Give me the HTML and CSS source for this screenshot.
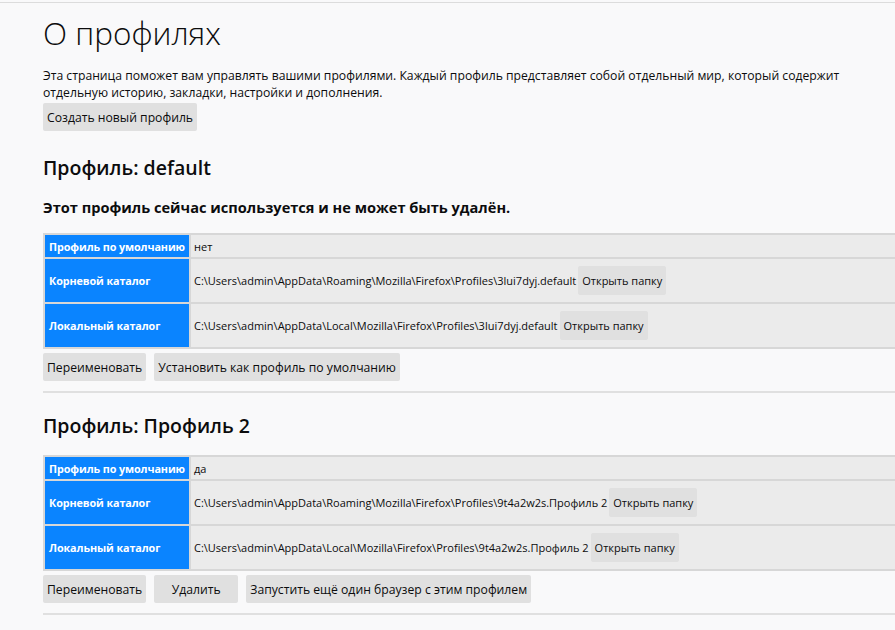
FILE: index.html
```html
<!DOCTYPE html>
<html lang="ru">
<head>
<meta charset="utf-8">
<title>О профилях</title>
<link rel="stylesheet" href="styles.css">
</head>
<body>
<div class="topline"></div>
<main class="page">
  <h1 class="title">О профилях</h1>
  <p class="intro">Эта страница поможет вам управлять вашими профилями. Каждый профиль представляет собой отдельный мир, который содержит отдельную историю, закладки, настройки и дополнения.</p>
  <button class="btn">Создать новый профиль</button>

  <section class="profile">
    <h2 class="ptitle">Профиль: default</h2>
    <h3 class="inuse">Этот профиль сейчас используется и не может быть удалён.</h3>
    <table class="ptable">
      <tr class="short"><th>Профиль по умолчанию</th><td>нет</td></tr>
      <tr><th>Корневой каталог</th><td><span class="path">C:\Users\admin\AppData\Roaming\Mozilla\Firefox\Profiles\3lui7dyj.default</span><button class="btn">Открыть папку</button></td></tr>
      <tr><th>Локальный каталог</th><td><span class="path">C:\Users\admin\AppData\Local\Mozilla\Firefox\Profiles\3lui7dyj.default</span><button class="btn">Открыть папку</button></td></tr>
    </table>
    <div class="actions">
      <button class="btn">Переименовать</button>
      <button class="btn">Установить как профиль по умолчанию</button>
    </div>
  </section>
  <hr class="sep">

  <section class="profile next">
    <h2 class="ptitle">Профиль: Профиль 2</h2>
    <table class="ptable">
      <tr class="short"><th>Профиль по умолчанию</th><td>да</td></tr>
      <tr><th>Корневой каталог</th><td><span class="path">C:\Users\admin\AppData\Roaming\Mozilla\Firefox\Profiles\9t4a2w2s.Профиль 2</span><button class="btn">Открыть папку</button></td></tr>
      <tr><th>Локальный каталог</th><td><span class="path">C:\Users\admin\AppData\Local\Mozilla\Firefox\Profiles\9t4a2w2s.Профиль 2</span><button class="btn">Открыть папку</button></td></tr>
    </table>
    <div class="actions">
      <button class="btn">Переименовать</button>
      <button class="btn wide">Удалить</button>
      <button class="btn">Запустить ещё один браузер с этим профилем</button>
    </div>
  </section>
  <hr class="sep">
</main>
</body>
</html>
```

FILE: styles.css
```css
html, body {
  margin: 0;
  padding: 0;
  background: #f9f9fa;
  overflow: hidden;
}
body {
  font-family: "Open Sans", "Noto Sans", sans-serif;
  font-size: 12.2px;
  color: #0c0c0d;
}
.topline {
  height: 1px;
  margin-top: 2px;
  background: #dcdcdc;
}
.page {
  margin-left: 43px;
  width: 900px;
}
.title {
  font-weight: 300;
  font-size: 31.5px;
  margin: 8px 0 0;
  line-height: 44px;
}
.intro {
  max-width: 812px;
  margin: 12px 0 2px;
  line-height: 17px;
}
.btn {
  font-family: inherit;
  font-size: 12.2px;
  color: #0c0c0d;
  background: #e0e0e0;
  border: none;
  border-radius: 2px;
  height: 28px;
  padding: 0 4px;
  margin: 0;
}
.ptitle {
  font-size: 19.5px;
  font-weight: 600;
  margin: 23px 0 0;
  line-height: 28px;
}
.next .ptitle {
  margin-top: 19px;
}
.inuse {
  font-size: 14.6px;
  font-weight: 700;
  margin: 14px 0 0;
  line-height: 22px;
}
.ptable {
  margin-top: 15px;
  border-collapse: separate;
  border-spacing: 2px;
  background: #d7d7d7;
  width: 100%;
}
.ptable th {
  background: #0a84ff;
  color: #fff;
  font-size: 10.8px;
  letter-spacing: -0.1px;
  font-weight: 700;
  text-align: left;
  padding: 0 4px;
  width: 136px;
  white-space: nowrap;
  height: 43px;
}
.ptable tr.short th, .ptable tr.short td {
  height: 22px;
}
.ptable td {
  background: #ebebeb;
  padding: 0 3px;
  font-size: 11px;
  white-space: nowrap;
}
.ptable td .btn {
  font-size: 11px;
  margin-left: 2px;
  height: 29px;
  vertical-align: middle;
}
.path {
  vertical-align: middle;
}
.actions {
  display: flex;
  gap: 8px;
  margin-top: 4px;
}
.actions .btn.wide {
  width: 84px;
}
.sep {
  border: none;
  height: 2px;
  background: #e0e0e0;
  margin: 10px 0 0;
}
```
